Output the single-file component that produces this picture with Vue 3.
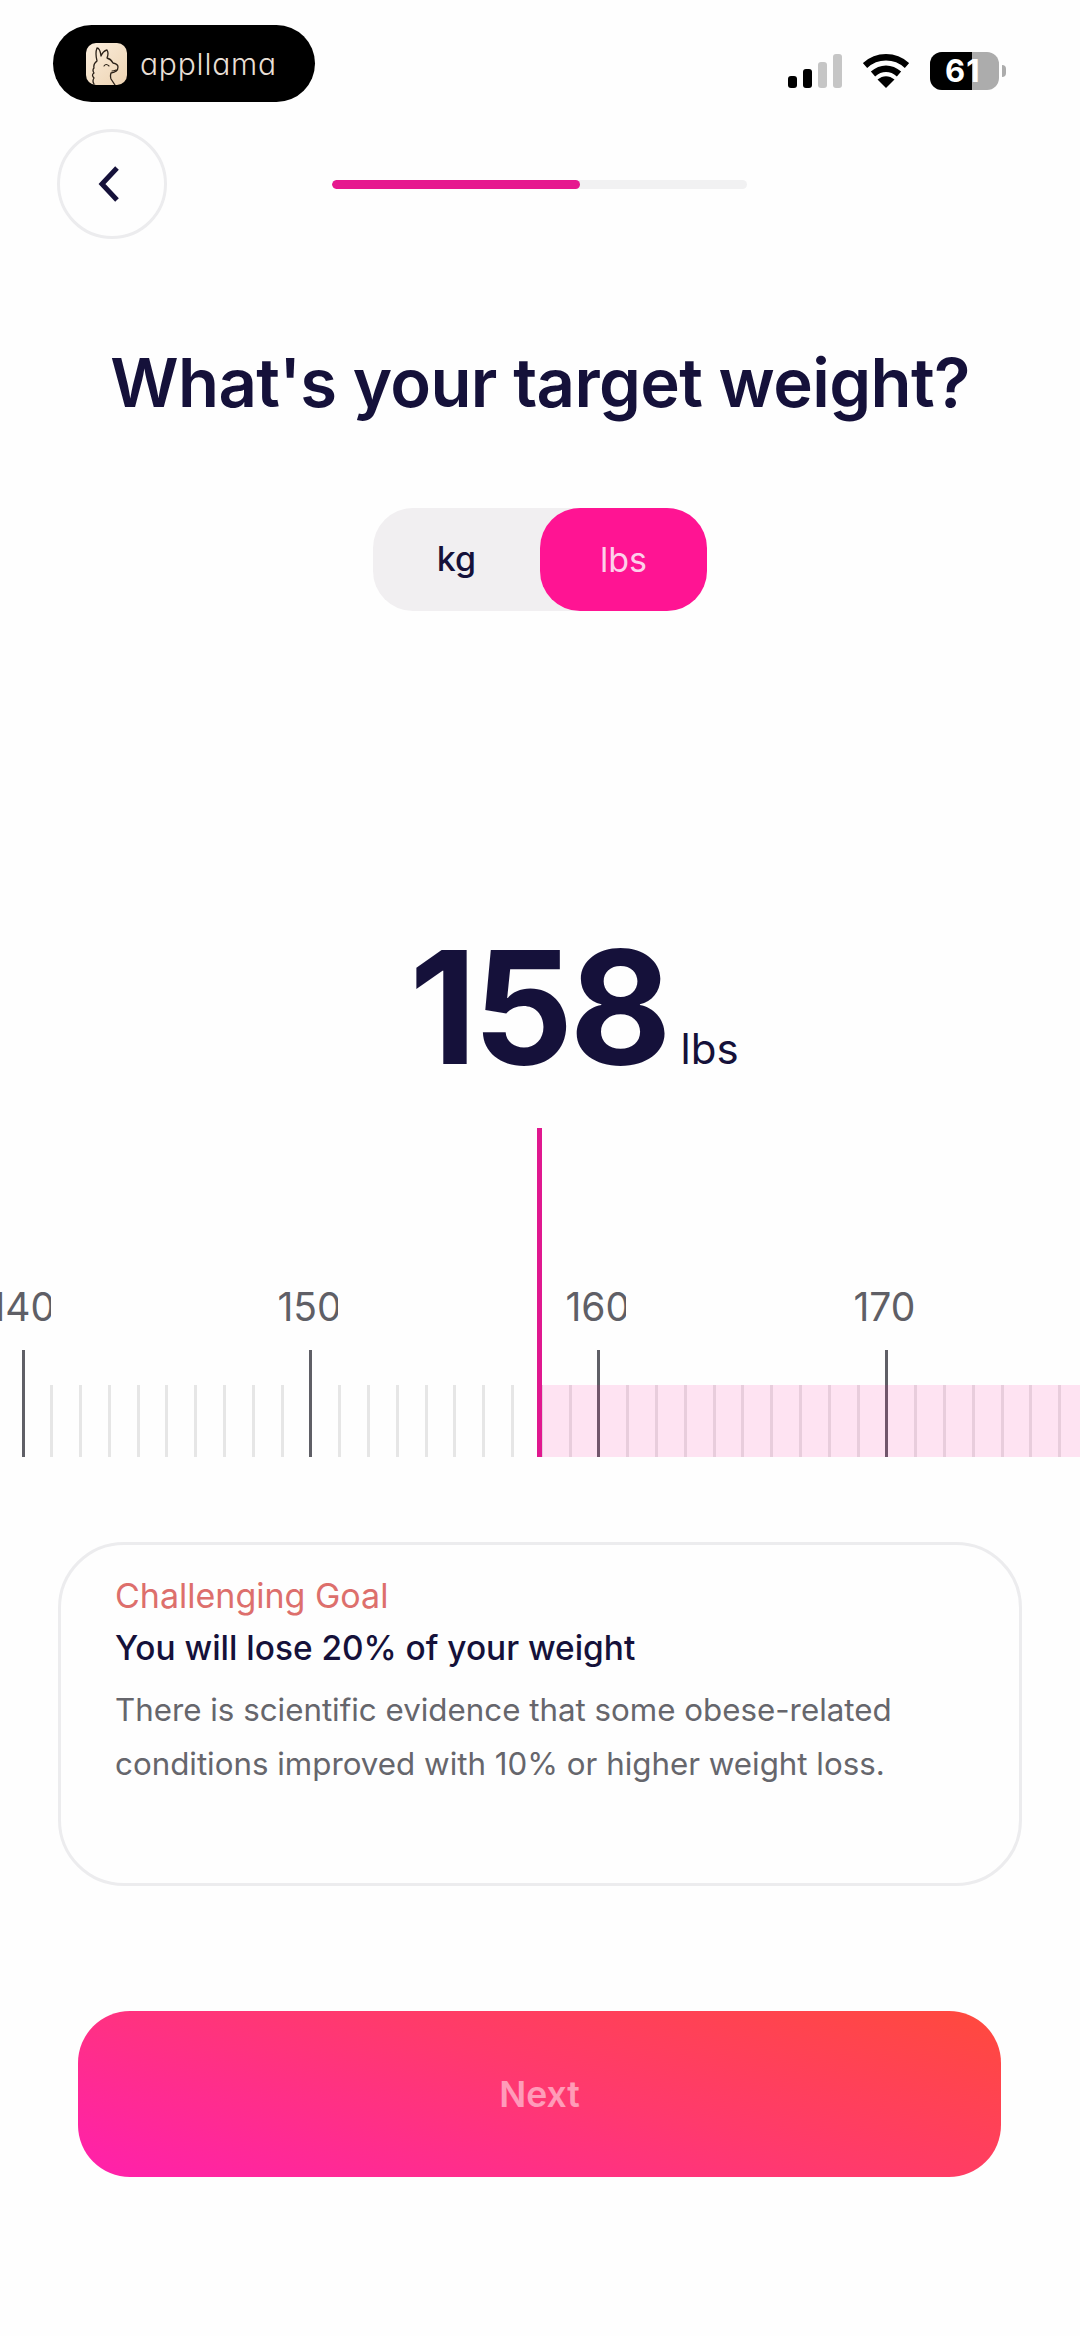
<template>
  <div class="screen">
    <!-- status bar -->
    <div class="status-bar">
      <div class="brand-pill">
        <svg class="brand-icon" viewBox="0 0 41 42">
          <defs>
            <linearGradient id="iconBg" x1="0" y1="0" x2="1" y2="1">
              <stop offset="0" stop-color="#fbeedd" />
              <stop offset="1" stop-color="#edd3b2" />
            </linearGradient>
          </defs>
          <rect width="41" height="42" rx="10" fill="url(#iconBg)" />
          <path d="M8 41q-2-3 0-6q-3-3 0-5q-2-3 0-5q-1-4 3-7q-2-8 0-13q3 0 4 8q2-5 6-6q2 3 0 8q4 1 6 5q5 1 5 4q0 5-7 6q-1 3 0 6l4 6" fill="none" stroke="#2b2118" stroke-width="1.3" stroke-linejoin="round" stroke-linecap="round" />
          <path d="M18 23q2-3 5 0M26 28q2 0 4-1" fill="none" stroke="#2b2118" stroke-width="1.1" stroke-linecap="round" />
        </svg>
        <span class="brand-name">appllama</span>
      </div>
      <div class="status-icons">
        <div class="signal">
          <span v-for="bar in signalBars" :key="bar.h" class="signal-bar" :class="{ dim: bar.dim }" :style="{ height: bar.h + 'px' }"></span>
        </div>
        <svg class="wifi" viewBox="0 0 46 34">
          <path d="M2 11.5C14 .5 32 .5 44 11.5" fill="none" stroke="#000" stroke-width="6.5" />
          <path d="M10 20c8-7 18-7 26 0" fill="none" stroke="#000" stroke-width="6.5" />
          <path d="M14.5 25.5c5.5-4.5 11.5-4.5 17 0L23 34z" fill="#000" />
        </svg>
        <div class="battery">
          <div class="battery-body">
            <div class="battery-fill"></div>
            <span class="battery-text">61</span>
          </div>
          <div class="battery-nub"></div>
        </div>
      </div>
    </div>

    <!-- back + progress -->
    <div class="top-row">
      <button class="back-btn">
        <svg width="22" height="38" viewBox="0 0 22 38">
          <path d="M19 3L4 19l15 16" fill="none" stroke="#15113a" stroke-width="5" />
        </svg>
      </button>
      <div class="progress">
        <div class="progress-fill"></div>
      </div>
    </div>

    <h1 class="title">What's your target weight?</h1>

    <div class="unit-toggle">
      <div class="unit kg">kg</div>
      <div class="unit active">lbs</div>
    </div>

    <div class="reading">
      <span class="reading-value">158</span>
      <span class="reading-unit">lbs</span>
    </div>

    <!-- ruler -->
    <div class="ruler">
      <div class="ticks">
        <div v-for="n in ticks" :key="n" class="tick" :class="{ major: n % 10 === 0 }">
          <span v-if="n % 10 === 0" class="tick-label">{{ n }}</span>
          <i class="tick-line"></i>
        </div>
      </div>
      <div class="ruler-band"></div>
      <div class="ruler-pointer"></div>
    </div>

    <div class="goal-card">
      <div class="goal-kicker">Challenging Goal</div>
      <div class="goal-title">You will lose 20% of your weight</div>
      <p class="goal-desc">There is scientific evidence that some obese-related conditions improved with 10% or higher weight loss.</p>
    </div>

    <button class="next-btn">Next</button>
  </div>
</template>

<script setup>
const signalBars = [
  { h: 12, dim: false },
  { h: 19, dim: false },
  { h: 26, dim: true },
  { h: 34, dim: true }
]

// 139 sits just off the left edge, the rest run past the right edge
const ticks = []
for (let n = 139; n <= 176; n++) ticks.push(n)
</script>

<style>
body {
  background: #fff;
}
</style>

<style scoped>
.screen {
  position: relative;
  width: 1080px;
  height: 2336px;
  overflow: hidden;
  background: #fefefe;
  font-family: Inter, "Liberation Sans", sans-serif;
  color: #15113a;
}

.status-bar {
  display: flex;
  justify-content: space-between;
  align-items: flex-start;
  padding: 25px 74px 0 53px;
  height: 77px;
}

.brand-pill {
  display: flex;
  align-items: center;
  width: 262px;
  height: 77px;
  box-sizing: border-box;
  padding-left: 33px;
  background: #000;
  border-radius: 39px;
}

.brand-icon {
  width: 41px;
  height: 42px;
  flex: none;
}

.brand-name {
  margin-left: 13px;
  font-family: Inter, sans-serif;
  font-feature-settings: "cv11";
  font-weight: 300;
  font-size: 30px;
  letter-spacing: 0.8px;
  color: #e8dfd5;
  line-height: 1;
}

.status-icons {
  display: flex;
  align-items: center;
  margin-top: 27px;
}

.signal {
  display: flex;
  align-items: flex-end;
  gap: 6px;
  height: 34px;
}

.signal-bar {
  width: 9px;
  border-radius: 3px;
  background: #000;
}

.signal-bar.dim {
  background: #c6c6c6;
}

.wifi {
  width: 46px;
  height: 34px;
  margin-left: 21px;
}

.battery {
  display: flex;
  align-items: center;
  margin-left: 21px;
}

.battery-body {
  position: relative;
  width: 69px;
  height: 38px;
  border-radius: 12px;
  overflow: hidden;
  background: #acacac;
}

.battery-fill {
  width: 42px;
  height: 100%;
  background: #000;
}

.battery-text {
  position: absolute;
  top: 0;
  left: 15px;
  font-family: Inter, sans-serif;
  font-weight: 700;
  font-size: 31px;
  letter-spacing: 1px;
  line-height: 38px;
  color: #fff;
}

.battery-nub {
  width: 4px;
  height: 12px;
  margin-left: 3px;
  border-radius: 0 4px 4px 0;
  background: #acacac;
}

.top-row {
  display: flex;
  align-items: center;
  padding: 27px 0 0 57px;
}

.back-btn {
  display: flex;
  align-items: center;
  justify-content: center;
  width: 110px;
  height: 110px;
  padding: 0 6px 0 0;
  background: transparent;
  border: 3px solid #ececee;
  border-radius: 50%;
}

.progress {
  width: 415px;
  height: 9px;
  margin-left: 165px;
  background: #f1f1f2;
  border-radius: 5px;
  overflow: hidden;
}

.progress-fill {
  width: 248px;
  height: 100%;
  background: #e6198f;
  border-radius: 5px;
}

.title {
  margin: 102px 0 0;
  text-align: center;
  font-size: 67px;
  font-weight: 600;
  line-height: 84px;
  letter-spacing: -0.6px;
}

.unit-toggle {
  display: flex;
  width: 334px;
  height: 103px;
  margin: 83px 0 0 373px;
  background: #f1eff1;
  border-radius: 40px;
}

.unit {
  flex: 1;
  display: flex;
  align-items: center;
  justify-content: center;
  font-size: 34px;
  font-weight: 450;
}

.unit.kg {
  padding-bottom: 3px;
  box-sizing: border-box;
}

.unit.active {
  background: #ff1493;
  border-radius: 40px;
  color: #fdd0ea;
  font-weight: 400;
}

.reading {
  display: flex;
  justify-content: center;
  align-items: baseline;
  gap: 13px;
  margin-top: 296px;
  height: 200px;
  line-height: 200px;
  padding-left: 68px;
}

.reading-value {
  font-size: 157px;
  font-weight: 650;
  letter-spacing: -4px;
}

.reading-unit {
  font-size: 42px;
  font-weight: 400;
}

.ruler {
  position: relative;
  height: 329px;
  margin-top: 21px;
}

.ticks {
  position: absolute;
  left: -7.3px;
  bottom: 0;
  display: flex;
}

.tick {
  position: relative;
  flex: none;
  width: 28.8px;
  height: 72px;
}

.tick-line {
  position: absolute;
  left: 0;
  bottom: 0;
  width: 3px;
  height: 72px;
  background: #e6e6e6;
}

.tick.major .tick-line {
  height: 107px;
  background: #5f5f66;
}

.tick-label {
  position: absolute;
  left: -32px;
  bottom: 127px;
  width: 61px;
  overflow: hidden;
  white-space: nowrap;
  font-size: 39px;
  line-height: 46px;
  color: #5f5f66;
}

.ruler-band {
  position: absolute;
  left: 542px;
  right: 0;
  bottom: 0;
  height: 72px;
  background: rgba(255, 20, 147, 0.115);
}

.ruler-pointer {
  position: absolute;
  left: 537px;
  bottom: 0;
  width: 5px;
  height: 329px;
  background: #e0188f;
}

.goal-card {
  width: 964px;
  height: 344px;
  box-sizing: border-box;
  margin: 85px 0 0 58px;
  padding: 28px 54px 0;
  border: 3px solid #ececee;
  border-radius: 66px;
}

.goal-kicker {
  font-size: 34px;
  line-height: 46px;
  color: #dd6f6c;
}

.goal-title {
  margin-top: 6px;
  font-size: 33.4px;
  font-weight: 450;
  line-height: 46px;
}

.goal-desc {
  margin: 12px 0 0;
  font-size: 31.3px;
  line-height: 54px;
  color: #66666c;
}

.next-btn {
  display: block;
  width: 923px;
  height: 166px;
  margin: 125px 0 0 78px;
  border: none;
  border-radius: 52px;
  background: linear-gradient(18deg, #ff22a8 4%, #ff3a6c 55%, #ff4a3c 100%);
  font-family: Inter, sans-serif;
  font-size: 35.5px;
  font-weight: 600;
  color: rgba(255, 255, 255, 0.5);
}
</style>
